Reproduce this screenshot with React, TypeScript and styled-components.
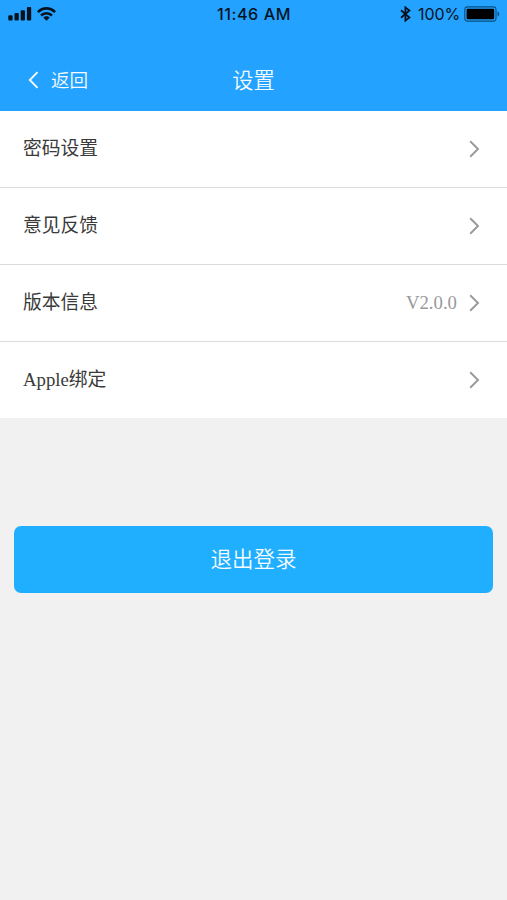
import React from "react";
import styled, { createGlobalStyle } from "styled-components";

const GlobalStyle = createGlobalStyle`
  * { box-sizing: border-box; }
  body { margin: 0; background: #f1f1f1; }
`;

const Screen = styled.div`
  min-height: 900px;
  background: #f1f1f1;
  font-family: "Liberation Serif", "Noto Sans CJK SC", sans-serif;
`;

const Header = styled.header`
  height: 111px;
  background: #23a2ff;
`;

const StatusBar = styled.div`
  display: grid;
  grid-template-columns: 1fr auto 1fr;
  align-items: center;
  height: 27px;
  padding: 0 7px 0 8px;
  color: #06131f;
  font: 500 16px/27px Inter, sans-serif;
`;

const StatusGroup = styled.div<{ $end?: boolean }>`
  display: flex;
  align-items: center;
  justify-content: ${(p) => (p.$end ? "flex-end" : "flex-start")};
  gap: 5px;
`;

const Time = styled.span`
  padding-top: 1px;
  font-size: 16.2px;
  letter-spacing: 0.55px;
`;

const Percent = styled.span`
  margin: 1px -1px 0 2px;
  font-size: 16px;
  font-weight: 400;
  letter-spacing: -0.1px;
`;

const NavBar = styled.nav`
  display: grid;
  grid-template-columns: 1fr auto 1fr;
  align-items: center;
  height: 84px;
  padding: 0 28px;
  color: #f4fbff;
`;

const BackButton = styled.button`
  display: flex;
  align-items: center;
  gap: 12px;
  height: 40px;
  margin-top: 20px;
  padding: 0;
  border: 0;
  background: none;
  color: inherit;
  font: 350 18.6px/28px "Noto Sans CJK SC", sans-serif;

  svg {
    margin-top: 2px;
  }
`;

const Title = styled.h1`
  margin: 20px 0 0;
  font: 350 21.2px/32px "Noto Sans CJK SC", sans-serif;
`;

const List = styled.ul`
  margin: 0;
  padding: 0;
  list-style: none;
  background: #fff;
`;

const Row = styled.li`
  display: flex;
  align-items: center;
  height: 77px;
  padding: 0 27px 0 23px;
  border-bottom: 1px solid #dcdcdc;

  &:last-child {
    height: 76px;
    border-bottom: 0;
  }
`;

const Label = styled.span`
  flex: 1;
  color: #3a3a3a;
  font-size: 18.75px;
  line-height: 28px;
`;

const Value = styled.span`
  margin-right: 12px;
  color: #999;
  font-size: 18.75px;
  line-height: 28px;
`;

const LogoutButton = styled.button`
  display: block;
  width: calc(100% - 28px);
  height: 67px;
  margin: 108px 14px 0;
  padding: 0 0 4px;
  border: 0;
  border-radius: 7px;
  background: #20aeff;
  color: #f4fbff;
  font: 350 21.5px/32px "Noto Sans CJK SC", sans-serif;
`;

const SignalIcon = () => (
  <svg width="24" height="14" viewBox="0 0 24 14" fill="#06131f">
    <rect x="0.3" y="8.2" width="4.3" height="5.3" rx="1" />
    <rect x="6.5" y="6" width="4.3" height="7.5" rx="1" />
    <rect x="12.7" y="3.2" width="4.3" height="10.3" rx="1" />
    <rect x="18.9" y="0" width="4.3" height="13.5" rx="1" />
  </svg>
);

const WifiIcon = () => (
  <svg width="19" height="14" viewBox="0 0 19 14" fill="none" stroke="#06131f" strokeWidth="2.6">
    <path d="M0.9 5.1C5.8 0.1 13.2 0.1 18.1 5.1" />
    <path d="M4 8.5C7.2 5.4 11.8 5.4 15 8.5" />
    <path d="M9.5 13.8L6.3 10.6C8 8.9 11 8.9 12.7 10.6Z" fill="#06131f" stroke="none" />
  </svg>
);

const BluetoothIcon = () => (
  <svg width="11" height="16" viewBox="0 0 11 16" fill="none" stroke="#06131f" strokeWidth="1.8">
    <path d="M1 4.3L9.4 11.5L5.4 14.6V1.4L9.4 4.5L1 11.7" />
  </svg>
);

const BatteryIcon = () => (
  <svg width="36" height="16" viewBox="0 0 36 16">
    <rect x="0.8" y="0.9" width="31.2" height="14.2" rx="2.8" fill="none" stroke="#0b4f80" strokeWidth="1.1" />
    <rect x="2.6" y="2.7" width="27.6" height="10.6" rx="1.2" fill="#000" />
    <path d="M33.5 5.6C35.8 6.2 35.8 9.8 33.5 10.4Z" fill="#0b4f80" />
  </svg>
);

const BackIcon = () => (
  <svg width="11" height="18" viewBox="0 0 11 18" fill="none" stroke="currentColor" strokeWidth="1.9">
    <path d="M9.5 1.1L1.8 9L9.5 16.9" />
  </svg>
);

const ChevronIcon = () => (
  <svg width="11" height="18" viewBox="0 0 11 18" fill="none" stroke="#999" strokeWidth="1.9">
    <path d="M1.2 1.3L9 9L1.2 16.7" />
  </svg>
);

const items: { label: string; value?: string }[] = [
  { label: "密码设置" },
  { label: "意见反馈" },
  { label: "版本信息", value: "V2.0.0" },
  { label: "Apple绑定" },
];

export default function App() {
  return (
    <Screen>
      <GlobalStyle />
      <Header>
        <StatusBar>
          <StatusGroup>
            <SignalIcon />
            <WifiIcon />
          </StatusGroup>
          <Time>11:46 AM</Time>
          <StatusGroup $end>
            <BluetoothIcon />
            <Percent>100%</Percent>
            <BatteryIcon />
          </StatusGroup>
        </StatusBar>
        <NavBar>
          <BackButton>
            <BackIcon />
            返回
          </BackButton>
          <Title>设置</Title>
        </NavBar>
      </Header>
      <List>
        {items.map((item) => (
          <Row key={item.label}>
            <Label>{item.label}</Label>
            {item.value && <Value>{item.value}</Value>}
            <ChevronIcon />
          </Row>
        ))}
      </List>
      <LogoutButton>退出登录</LogoutButton>
    </Screen>
  );
}
